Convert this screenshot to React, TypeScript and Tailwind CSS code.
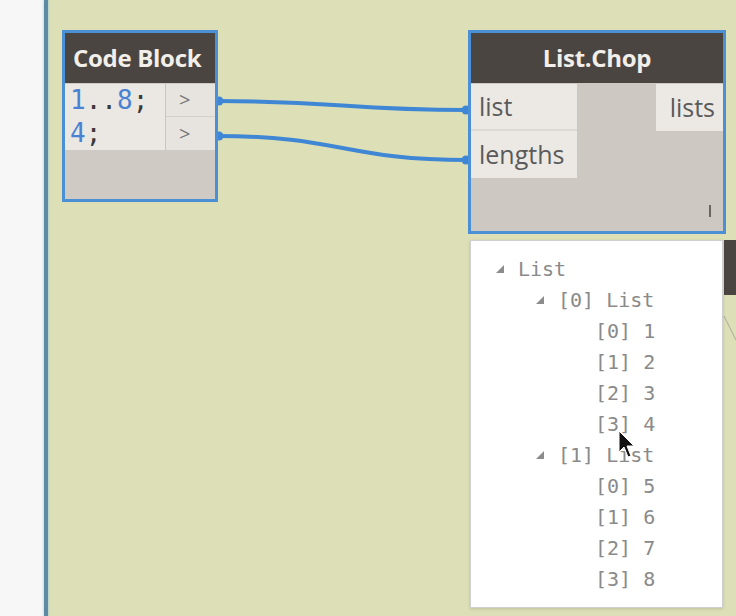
import React from 'react';

const mono = { fontFamily: '"DejaVu Sans Mono", "Liberation Mono", monospace' };
const sans = { fontFamily: '"Open Sans", "Noto Sans", sans-serif' };

type Row = { depth: number; label: string; toggle?: boolean };

const rows: Row[] = [
  { depth: 0, label: 'List', toggle: true },
  { depth: 1, label: '[0] List', toggle: true },
  { depth: 2, label: '[0] 1' },
  { depth: 2, label: '[1] 2' },
  { depth: 2, label: '[2] 3' },
  { depth: 2, label: '[3] 4' },
  { depth: 1, label: '[1] List', toggle: true },
  { depth: 2, label: '[0] 5' },
  { depth: 2, label: '[1] 6' },
  { depth: 2, label: '[2] 7' },
  { depth: 2, label: '[3] 8' },
];

const indent = ['pl-[24px]', 'pl-[64px]', 'pl-[124px]'];

const Toggle = () => (
  <svg width="10" height="10" viewBox="0 0 10 10" className="mr-[13px] shrink-0">
    <polygon points="9,1 9,9 1,9" fill="#8c8c8c" />
  </svg>
);

const CodeBlock = () => (
  <div className="absolute left-[62px] top-[30px] w-[156px] h-[172px] border-[3px] border-[#4b8fd6] bg-[#cfcac4] flex flex-col">
    <div
      className="h-[50px] bg-[#4a4541] text-[#f2efea] text-[24px] font-bold flex items-center pl-[8px] tracking-[-0.3px]"
      style={sans}
    >
      Code Block
    </div>
    <div className="flex mt-[1px]">
      <div className="w-[100px] bg-[#ebe8e4] pl-[5px] text-[26px] leading-[33px]" style={mono}>
        <div>
          <span className="text-[#4a82d3]">1</span>
          <span className="text-[#3a3a3a]">..</span>
          <span className="text-[#4a82d3]">8</span>
          <span className="text-[#3a3a3a]">;</span>
        </div>
        <div>
          <span className="text-[#4a82d3]">4</span>
          <span className="text-[#3a3a3a]">;</span>
        </div>
      </div>
      <div className="flex-1 border-l border-[#c9c5bf] flex flex-col">
        <div className="h-[33px] bg-[#e7e4e0] border-b border-[#d3cfca] flex items-center pl-[13px] text-[#777] text-[20px]" style={sans}>
          &gt;
        </div>
        <div className="h-[33px] bg-[#e7e4e0] flex items-center pl-[13px] text-[#777] text-[20px]" style={sans}>
          &gt;
        </div>
      </div>
    </div>
  </div>
);

const ListChop = () => (
  <div className="absolute left-[468px] top-[30px] w-[258px] h-[204px] border-[3px] border-[#4b8fd6] bg-[#cdc8c2] flex flex-col" style={sans}>
    <div className="h-[50px] bg-[#4a4541] text-[#f2efea] text-[24px] font-bold flex items-center justify-center tracking-[-0.3px]">
      List.Chop
    </div>
    <div className="flex flex-1 mt-[1px]">
      <div className="w-[106px] flex flex-col">
        <div className="h-[47px] bg-[#ece9e5] border-b-2 border-[#dedad5] flex items-center pl-[8px] text-[25px] text-[#5a5a5a]">
          list
        </div>
        <div className="h-[47px] bg-[#ece9e5] flex items-center pl-[8px] text-[25px] text-[#5a5a5a]">
          lengths
        </div>
      </div>
      <div className="flex-1" />
      <div className="w-[67px] flex flex-col">
        <div className="h-[47px] bg-[#ece9e5] flex items-center justify-end pr-[8px] text-[25px] text-[#5a5a5a]">
          lists
        </div>
        <div className="flex-1 flex items-end justify-end pr-[12px] pb-[14px]">
          <div className="w-[2px] h-[12px] bg-[#6a6560]" />
        </div>
      </div>
    </div>
  </div>
);

const Preview = () => (
  <div className="absolute left-[470px] top-[240px] w-[253px] h-[368px] bg-white border border-[#cfcfcf] shadow-[0_1px_3px_rgba(0,0,0,0.15)] pt-[12px]">
    {rows.map((r, i) => (
      <div
        key={i}
        className={`h-[31px] flex items-center text-[20px] text-[#8a8a8a] ${indent[r.depth]}`}
        style={mono}
      >
        {r.toggle && <Toggle />}
        <span className="whitespace-pre">{r.label}</span>
      </div>
    ))}
  </div>
);

const Wires = () => (
  <svg className="absolute left-0 top-0" width="736" height="616">
    <g stroke="#3f86d4" strokeWidth="4" fill="none">
      <path d="M217 101 C 340 101, 345 110, 468 110" />
      <path d="M217 136 C 340 136, 345 160, 468 160" />
    </g>
    <g fill="#3f86d4">
      <circle cx="219" cy="101" r="4.5" />
      <circle cx="219" cy="136" r="4.5" />
      <circle cx="466" cy="110" r="4.5" />
      <circle cx="466" cy="160" r="4.5" />
    </g>
    <line x1="724" y1="316" x2="736" y2="340" stroke="#a9a89a" strokeWidth="1" />
  </svg>
);

const Cursor = () => (
  <svg className="absolute left-[618px] top-[430px]" width="20" height="30" viewBox="0 0 20 30">
    <path d="M1 1 L1 22 L6 17 L10 27 L13 26 L9 16 L16 16 Z" fill="#111" stroke="#fff" strokeWidth="1" />
  </svg>
);

export default function App() {
  return (
    <div className="relative w-[736px] h-[616px] flex overflow-hidden">
      {/* side panel + splitter */}
      <div className="w-[44px] h-full bg-[#f7f7f7]" />
      <div className="w-[4px] h-full bg-[#5d8ba6] shadow-[0_0_3px_rgba(120,190,230,0.8)] z-10" />
      <div className="flex-1 h-full bg-[#dde0b6]" />

      {/* canvas content */}
      <Wires />
      <CodeBlock />
      <ListChop />
      <div className="absolute left-[724px] top-[240px] w-[12px] h-[55px] bg-[#4a4541]" />
      <Preview />
      <Cursor />
    </div>
  );
}
